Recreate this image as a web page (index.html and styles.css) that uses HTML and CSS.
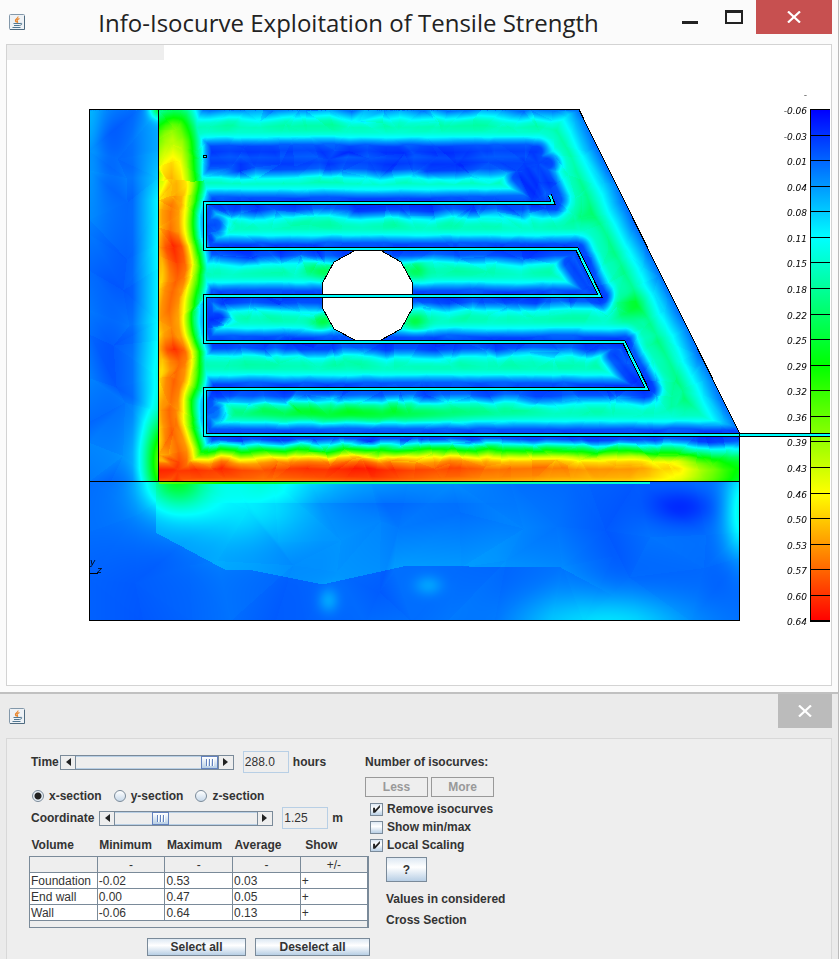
FILE: index.html
```html
<!DOCTYPE html>
<html lang="en">
<head>
  <meta charset="UTF-8">
  <meta name="viewport" content="width=device-width, initial-scale=1.0">
  <title>Info-Isocurve Exploitation of Tensile Strength</title>
  <link rel="stylesheet" href="styles.css">
</head>
<body>
  <svg class="defs" width="0" height="0" aria-hidden="true">
    <symbol id="java" viewBox="0 0 16 16">
      <rect x="0.5" y="0.5" width="15" height="15" rx="1" fill="#eef2f6" stroke="#8398aa"/>
      <path d="M1 15.5h14.500V2" fill="none" stroke="#4f6b80"/>
      <path d="M9 2.500C9.500 4.500 5.500 5 6.500 7c.3.700 1 1 1 1.500M10.500 4.500C8 5.500 7.500 6.500 8.500 7.500c.4.500.2.900-.2 1.300" fill="none" stroke="#e8862d" stroke-width="1.200"/>
      <path d="M4.500 9.500h6.500M5 11.500h5.500M3.500 13.500h8" fill="none" stroke="#527892" stroke-width="1.200"/>
      <path d="M11 9.500c2.500-1 2.500 1.500-.5 2" fill="none" stroke="#527892"/>
    </symbol>
  </svg>

  <section class="window">
    <header class="titlebar">
      <svg class="app-icon" width="16" height="16"><use href="#java"/></svg>
      <h1>Info-Isocurve Exploitation of Tensile Strength</h1>
      <div class="window-buttons">
        <button type="button" aria-label="Minimize">
          <svg width="44" height="34"><rect x="14" y="21" width="16" height="3" fill="#222"/></svg>
        </button>
        <button type="button" aria-label="Maximize">
          <svg width="44" height="34"><path d="M13 10h18v14H13zM15 13v9h14v-9z" fill="#222" fill-rule="evenodd"/></svg>
        </button>
        <button type="button" class="close" aria-label="Close">
          <svg width="14" height="12"><path d="M1 0.500L13 11.500M13 0.500L1 11.500" stroke="#fff" stroke-width="2.200"/></svg>
        </button>
      </div>
    </header>

    <div class="plot">
      <div class="plot-toolbar"></div>
      <canvas id="field" width="824" height="640"></canvas>
      <svg class="outline" viewBox="7 45 824 640">
        <defs>
          <linearGradient id="scale" x1="0" y1="0" x2="0" y2="1">
            <stop offset="0" stop-color="#00f"/>
            <stop offset="0.25" stop-color="#0ff"/>
            <stop offset="0.5" stop-color="#0f0"/>
            <stop offset="0.75" stop-color="#ff0"/>
            <stop offset="1" stop-color="#f00"/>
          </linearGradient>
        </defs>

        <!-- colour scale, ticks are added by plot.js -->
        <rect x="811" y="110" width="19" height="511" fill="url(#scale)"/>
        <path class="edge" d="M810.500 109V622M810 620.500H830M810 621.500H830"/>
        <g id="ticks" class="ticks"><text x="807" y="98">-</text></g>

        <!-- opening -->
        <path class="edge opening" d="M356 250H380L401 262L412.500 283V308L401 329L381 340H355L334 329L322.500 308V283L334 262Z"/>

        <!-- wall, end wall, foundation -->
        <path class="edge" d="M89.500 109.500H579L739.500 433V620.500H89.500ZM158.500 109V481M89 481.500H740"/>

        <!-- cooling pipes -->
        <g class="pipe">
          <path d="M550 195L553 203H205V249H577L600 296H205V342H624L647 389H205V435H830"/>
          <path d="M550 195L553 203H205V249H577L600 296H205V342H624L647 389H205V435H830"/>
        </g>
        <rect x="203" y="155" width="4" height="3"/>
        <rect x="204" y="156" width="2" height="1" fill="#0ff"/>
        <path class="edge" d="M739.500 432V438M90 573.500H98"/>
        <text class="axis" x="90" y="565">y</text>
        <text class="axis" x="97" y="573">z</text>
      </svg>
    </div>
  </section>

  <section class="window dialog">
    <header class="titlebar">
      <svg class="app-icon" width="16" height="16"><use href="#java"/></svg>
      <div class="window-buttons">
        <button type="button" class="close" aria-label="Close">
          <svg width="14" height="12"><path d="M1 0.500L13 11.500M13 0.500L1 11.500" stroke="#fff" stroke-width="2.200"/></svg>
        </button>
      </div>
    </header>

    <form class="panel">
      <div class="sections">
        <div class="row">
          <label for="time">Time</label>
          <div class="scrollbar">
            <button type="button" aria-label="Earlier"><svg width="5" height="8"><path d="M5 0v8L0 4z"/></svg></button>
            <input type="range" id="time" min="0" max="100" value="100">
            <button type="button" aria-label="Later"><svg width="5" height="8"><path d="M0 0v8l5-4z"/></svg></button>
          </div>
          <input type="text" id="hours" value="288.0">
          <label for="hours">hours</label>
        </div>

        <div class="radios">
          <label><input type="radio" name="section" checked>x-section</label>
          <label><input type="radio" name="section">y-section</label>
          <label><input type="radio" name="section">z-section</label>
        </div>

        <div class="row coordinate">
          <label for="coord">Coordinate</label>
          <div class="scrollbar">
            <button type="button" aria-label="Decrease"><svg width="5" height="8"><path d="M5 0v8L0 4z"/></svg></button>
            <input type="range" id="coord" min="0" max="100" value="29">
            <button type="button" aria-label="Increase"><svg width="5" height="8"><path d="M0 0v8l5-4z"/></svg></button>
          </div>
          <input type="text" id="meters" value="1.25">
          <label for="meters">m</label>
        </div>

        <table>
          <thead>
            <tr><th>Volume</th><th>Minimum</th><th>Maximum</th><th>Average</th><th>Show</th></tr>
          </thead>
          <tbody>
            <tr class="sort"><td></td><td>-</td><td>-</td><td>-</td><td>+/-</td></tr>
            <tr><td>Foundation</td><td>-0.02</td><td>0.53</td><td>0.03</td><td>+</td></tr>
            <tr><td>End wall</td><td>0.00</td><td>0.47</td><td>0.05</td><td>+</td></tr>
            <tr><td>Wall</td><td>-0.06</td><td>0.64</td><td>0.13</td><td>+</td></tr>
            <tr class="tail"><td colspan="5"></td></tr>
          </tbody>
        </table>

        <div class="actions">
          <button type="button" class="btn select-all">Select all</button>
          <button type="button" class="btn deselect-all">Deselect all</button>
        </div>
      </div>

      <div class="options">
        <div class="isocurves">
          <h2>Number of isocurves:</h2>
          <div class="steps">
            <button type="button" class="btn" disabled>Less</button>
            <button type="button" class="btn" disabled>More</button>
          </div>
        </div>
        <label class="check"><input type="checkbox" checked>Remove isocurves</label>
        <label class="check"><input type="checkbox">Show min/max</label>
        <label class="check"><input type="checkbox" checked>Local Scaling</label>
        <div class="help">
          <button type="button" class="btn">?</button>
          <p>Values in considered<br>Cross Section</p>
        </div>
      </div>
    </form>
  </section>

  <script src="plot.js"></script>
</body>
</html>
```

FILE: styles.css
```css
* {
  margin: 0;
  padding: 0;
  box-sizing: border-box;
}

body {
  font-family: "Liberation Sans", Arial, sans-serif;
  font-size: 12px;
  color: #333;
  background: #ebebeb;
  min-height: 100vh;
  display: flex;
  flex-direction: column;
}

.defs {
  position: absolute;
}

button {
  font: inherit;
  color: inherit;
  border: none;
  background: none;
}

/* windows */
.window {
  background: #fbfbfb;
  padding: 0 6px 6px;
  border-right: 1px solid #bbb;
  border-bottom: 2px solid #c0c0c0;
}

.titlebar {
  height: 44px;
  display: flex;
  align-items: center;
}

.app-icon {
  margin-left: 3px;
}

h1 {
  flex: 1;
  padding: 2px 0 0 4px;
  font-family: "Open Sans", "Noto Sans", sans-serif;
  font-size: 24px;
  font-weight: 400;
  line-height: 32px;
  color: #222;
  text-align: center;
  white-space: nowrap;
}

.window-buttons {
  display: flex;
  align-self: flex-start;
  margin-left: auto;
}

.window-buttons svg {
  display: block;
}

.close {
  width: 76px;
  height: 34px;
  display: flex;
  align-items: center;
  justify-content: center;
  background: #c75050;
}

.dialog {
  flex: 1;
  display: flex;
  flex-direction: column;
  background: #ebebeb;
  padding-bottom: 0;
  border-bottom: none;
}

.dialog .close {
  width: 54px;
  background: #bbb;
}

/* plot */
.plot {
  display: grid;
  background: #fff;
  border: 1px solid #d3d3d3;
}

.plot > * {
  grid-area: 1 / 1;
}

.plot canvas,
.outline {
  display: block;
  width: 100%;
  height: auto;
}

.plot-toolbar {
  width: 157px;
  height: 15px;
  background: #eee;
}

.edge {
  fill: none;
  stroke: #000;
  shape-rendering: crispEdges;
}

.opening {
  fill: #fff;
}

.pipe path {
  fill: none;
  stroke: #000;
  stroke-width: 4px;
  shape-rendering: crispEdges;
}

.pipe path + path {
  stroke: #0ff;
  stroke-width: 2px;
}

.ticks text,
.axis {
  font-family: "DejaVu Sans", sans-serif;
  font-size: 9px;
  font-style: italic;
  fill: #000;
}

.ticks text {
  text-anchor: end;
}

/* controls */
.panel {
  flex: 1;
  display: flex;
  align-items: flex-start;
  padding: 12px 22px 3px;
  background: #eee;
  border: 1px solid #d8d8d8;
  border-bottom: none;
  font-weight: 700;
}

.sections {
  width: 341px;
}

.row {
  display: flex;
  align-items: center;
  height: 22px;
  padding-left: 2px;
}

.scrollbar {
  display: flex;
  width: 174px;
  height: 15px;
  margin: 0 9px 0 1px;
  border: 1px solid #7a8a99;
}

.coordinate .scrollbar {
  margin-left: 5px;
}

.scrollbar button {
  width: 15px;
  display: flex;
  align-items: center;
  justify-content: center;
}

.scrollbar svg {
  fill: #222;
}

input[type="range"] {
  appearance: none;
  flex: 1;
  min-width: 0;
  background: #eee;
  border: 1px solid #b8cfe5;
  border-width: 1px 0;
  box-shadow: -1px 0 #7a8a99, 1px 0 #7a8a99;
}

input[type="range"]::-webkit-slider-thumb {
  appearance: none;
  width: 17px;
  height: 13px;
  border: 1px solid #6382bf;
  background:
    repeating-linear-gradient(90deg, #6382bf 0 1px, #fff 1px 2px, transparent 2px 3px) 4px 2px / 8px 7px no-repeat,
    linear-gradient(#fff, #b8cfe5);
}

input[type="text"] {
  width: 46px;
  height: 22px;
  margin-right: 4px;
  padding: 0 1px;
  font: 400 12px "Liberation Sans", Arial, sans-serif;
  color: #333;
  background: #eee;
  border: 1px solid #b8cfe5;
}

.radios {
  display: flex;
  gap: 12px;
  margin: 16px 0 4px;
  padding-left: 3px;
}

.radios label,
.check {
  display: flex;
  align-items: center;
}

.radios label {
  height: 14px;
}

input[type="radio"] {
  appearance: none;
  width: 12px;
  height: 12px;
  margin-right: 5px;
  border: 1px solid #7a8a99;
  border-radius: 50%;
  background: linear-gradient(#fff, #c8d9ea);
}

input[type="radio"]:checked {
  background: radial-gradient(circle, #222 3px, #e8f0f7 4px);
}

table {
  width: 340px;
  table-layout: fixed;
  border-collapse: collapse;
  font-weight: 400;
}

th {
  height: 27px;
  padding: 5px 0 0 2px;
  font-weight: 700;
  text-align: left;
}

th:last-child {
  padding-left: 5px;
}

td {
  height: 16px;
  padding: 1px 1px 0;
  line-height: 14px;
  background: #fff;
  border: 1px solid #7a8a99;
  white-space: nowrap;
}

td:last-child {
  border-right-width: 2px;
}

.sort td {
  background: #eee;
  text-align: center;
}

.tail td {
  height: 7px;
  background: #eee;
}

.actions {
  display: flex;
  justify-content: flex-end;
  gap: 9px;
  margin-top: 10px;
}

.btn {
  height: 18px;
  font-weight: 700;
  background: linear-gradient(#dde8f3, #fff 40%, #b8cfe5);
  border: 1px solid #7a8a99;
}

.btn:disabled {
  color: #999;
  background: #eee;
  border-color: #999;
}

.select-all {
  width: 99px;
}

.deselect-all {
  width: 115px;
}

.isocurves {
  margin-left: -5px;
}

h2 {
  font-size: 12px;
  line-height: 22px;
}

.steps {
  display: flex;
  gap: 3px;
  margin: 4px 0 3px;
}

.steps .btn {
  width: 63px;
  height: 20px;
}

.check {
  height: 18px;
}

input[type="checkbox"] {
  appearance: none;
  position: relative;
  width: 13px;
  height: 13px;
  margin-right: 4px;
  border: 1px solid #7a8a99;
  background: linear-gradient(#dde8f3, #fff 40%, #b8cfe5);
}

input[type="checkbox"]:checked::after {
  content: "";
  position: absolute;
  inset: 1px;
  background: #222;
  clip-path: polygon(12% 36%, 34% 36%, 34% 62%, 88% 6%, 88% 34%, 34% 92%, 12% 92%);
}

.help {
  margin: 3px 0 0 16px;
}

.help .btn {
  width: 41px;
  height: 25px;
}

.help p {
  margin-top: 7px;
  line-height: 21px;
}
```

FILE: plot.js
```js
const X0 = 7, Y0 = 45;
const canvas = document.getElementById('field');
const ctx = canvas.getContext('2d');
const W = canvas.width, H = canvas.height;

// pipe runs, the top loop is drawn without an outline
const pipes = [
  [207, 151, 535, 151], [207, 163, 545, 163], [532, 152, 556, 200], [522, 160, 545, 203], [518, 176, 540, 200],
  [205, 203, 553, 203], [205, 203, 205, 249], [205, 249, 577, 249], [577, 249, 600, 296],
  [205, 296, 600, 296], [205, 296, 205, 342], [205, 342, 624, 342], [624, 342, 647, 389],
  [205, 389, 647, 389], [205, 389, 205, 435], [205, 435, 739, 435],
  [205, 226, 215, 226], [205, 318, 215, 318], [205, 412, 213, 412],
  [570, 262, 590, 290], [615, 355, 637, 383]
];

// labels of the colour scale
const labels = ['-0.06', '-0.03', '0.01', '0.04', '0.08', '0.11', '0.15', '0.18', '0.22', '0.25', '0.29',
  '0.32', '0.36', '0.39', '0.43', '0.46', '0.50', '0.53', '0.57', '0.60', '0.64'];

let seed = 7;
function random() {
  seed = (seed * 16807) % 2147483647;
  return seed / 2147483647;
}

// linear interpolation in a list of [position, value]
function lerp(list, p) {
  if (p <= list[0][0]) return list[0][1];
  for (let i = 1; i < list.length; i++) {
    if (p <= list[i][0]) {
      const [a, va] = list[i - 1];
      const [b, vb] = list[i];
      return va + (vb - va) * (p - a) / (b - a);
    }
  }
  return list[list.length - 1][1];
}

function bump(x, y, cx, cy, rx, ry) {
  const dx = (x - cx) / rx, dy = (y - cy) / ry;
  return Math.exp(-dx * dx - dy * dy);
}

function pipeDistance(x, y) {
  let best = 1e9;
  for (const [x1, y1, x2, y2] of pipes) {
    const dx = x2 - x1, dy = y2 - y1;
    const k = Math.max(0, Math.min(1, ((x - x1) * dx + (y - y1) * dy) / (dx * dx + dy * dy)));
    best = Math.min(best, (x - x1 - k * dx) ** 2 + (y - y1 - k * dy) ** 2);
  }
  return Math.sqrt(best);
}

const byDistance = [[0, 0.06], [6, 0.08], [11, 0.17], [15, 0.26], [20, 0.31], [26, 0.33], [38, 0.39], [55, 0.37]];
const bySlant = [[0, 0.11], [9, 0.17], [19, 0.24], [34, 0.35], [60, 0.6]];
const byTop = [[0, 0.12], [7, 0.23], [12, 0.3], [18, 0.34], [40, 0.6]];
const leftHeat = [[110, 0.42], [125, 0.58], [140, 0.68], [165, 0.77], [205, 0.87], [230, 0.9], [245, 0.97],
  [262, 0.94], [290, 0.88], [335, 0.89], [350, 0.95], [370, 0.89], [440, 0.9], [470, 0.96]];
const leftShape = [[158, 0.88], [165, 0.96], [173, 1], [181, 0.96], [187, 0.84], [193, 0.66], [199, 0.44], [204, 0.24], [214, 0]];
const baseShape = [[437, 0], [443, 0.22], [448, 0.46], [453, 0.64], [457, 0.8], [462, 0.92], [469, 1], [477, 0.97], [481, 0.93]];
const baseHeat = [[158, 0.97], [270, 0.93], [375, 0.97], [430, 0.93], [500, 0.89], [560, 0.86], [630, 0.85], [680, 0.76], [712, 0.62], [739, 0.48]];
const ridge = [[155, 532], [226, 570], [252, 570], [322, 584], [403, 566], [468, 566], [560, 567], [616, 597]];

function wall(x, y) {
  const s = 579 + (y - 110) * 160 / 323 - x;
  let v = Math.min(lerp(byDistance, pipeDistance(x, y)), lerp(byTop, y - 110));
  if (y < 440) v = Math.min(v, lerp(bySlant, s));
  v += 0.15 * bump(x, y, 350, 412, 110, 11);
  v += 0.08 * bump(x, y, 628, 307, 16, 14);
  v += 0.12 * (bump(x, y, 322, 268, 12, 9) + bump(x, y, 414, 268, 12, 9) + bump(x, y, 322, 322, 12, 9) + bump(x, y, 414, 322, 12, 9));
  const band = y > 180 ? 4 * Math.cos((y - 272) * Math.PI * 2 / 93) : 0;
  const left = lerp(leftHeat, y) * lerp(leftShape, x - band);
  const base = lerp(baseHeat, x) * lerp(baseShape, y);
  return Math.max(v, left, base);
}

function endWall(x, y) {
  let v = 0.12;
  v += 0.13 * Math.max(0, (x - 132) / 26) * lerp([[150, 0.3], [200, 1]], y);
  v += 0.05 * bump(x, y, 89, 140, 14, 60);
  v -= 0.03 * bump(x, y, 118, 155, 25, 35);
  v -= 0.03 * bump(x, y, 112, 340, 25, 90);
  v += 0.3 * bump(x, y, 160, 108, 10, 10);
  v += 0.38 * bump(x, y, 166, 462, 22, 42);
  return v;
}

function foundation(x, y) {
  const r = lerp(ridge, x);
  let v = 0.1;
  if (x > 155 && x < 616 && y < r) v += 0.045 * (1 - Math.min(1, (r - y) / 90)) * Math.min(1, (616 - x) / 120);
  v += 0.3 * bump(x, y, 176, 476, 32, 30);
  v += 0.13 * bump(x, y, 235, 500, 80, 42);
  if (y < 503) v += 0.09 * (1 - (y - 481) / 26) * lerp([[200, 0], [260, 1], [380, 0.7], [520, 0]], x);
  v -= 0.06 * bump(x, y, 683, 506, 34, 18);
  v += 0.18 * bump(x, y, 744, 510, 20, 48);
  v += 0.12 * bump(x, y, 605, 626, 90, 34);
  v += 0.06 * bump(x, y, 328, 600, 10, 12) + 0.05 * bump(x, y, 428, 585, 14, 10);
  if (y < 484 && x > 158 && x < 650) v = Math.max(v, lerp([[158, 0.6], [230, 0.5], [330, 0.38], [650, 0.3]], x));
  return v;
}

// element noise, interpolated linearly over jittered triangles
const noise = new Float32Array(W * H);

function triangle(a, b, c, step) {
  const area = (b.x - a.x) * (c.y - a.y) - (c.x - a.x) * (b.y - a.y);
  if (!area) return;
  const offset = (random() - 0.5) * step;
  const left = Math.max(0, Math.floor(Math.min(a.x, b.x, c.x)));
  const right = Math.min(W - 1, Math.ceil(Math.max(a.x, b.x, c.x)));
  const top = Math.max(0, Math.floor(Math.min(a.y, b.y, c.y)));
  const bottom = Math.min(H - 1, Math.ceil(Math.max(a.y, b.y, c.y)));
  for (let y = top; y <= bottom; y++) {
    for (let x = left; x <= right; x++) {
      const u = ((b.x - x) * (c.y - y) - (c.x - x) * (b.y - y)) / area;
      const v = ((c.x - x) * (a.y - y) - (a.x - x) * (c.y - y)) / area;
      const w = 1 - u - v;
      if (u >= 0 && v >= 0 && w >= 0) noise[y * W + x] = u * a.n + v * b.n + w * c.n + offset;
    }
  }
}

function mesh(x1, y1, x2, y2, cell, amount, step) {
  const cols = Math.round((x2 - x1) / cell), rows = Math.round((y2 - y1) / cell);
  const nodes = [];
  for (let j = 0; j <= rows; j++) {
    for (let i = 0; i <= cols; i++) {
      const jx = i % cols ? (random() - 0.5) * cell * 0.9 : 0;
      const jy = j % rows ? (random() - 0.5) * cell * 0.9 : 0;
      nodes.push({
        x: x1 - X0 + i * (x2 - x1) / cols + jx,
        y: y1 - Y0 + j * (y2 - y1) / rows + jy,
        n: (random() - 0.5) * 2 * amount
      });
    }
  }
  for (let j = 0; j < rows; j++) {
    for (let i = 0; i < cols; i++) {
      const a = nodes[j * (cols + 1) + i], b = nodes[j * (cols + 1) + i + 1];
      const c = nodes[(j + 1) * (cols + 1) + i], d = nodes[(j + 1) * (cols + 1) + i + 1];
      if (random() > 0.5) {
        triangle(a, b, c, step);
        triangle(b, d, c, step);
      } else {
        triangle(a, b, d, step);
        triangle(a, d, c, step);
      }
    }
  }
}

mesh(158, 110, 740, 481, 17, 0.035, 0.024);
mesh(89, 110, 158, 481, 34, 0.02, 0.01);
mesh(89, 481, 740, 621, 46, 0.014, 0.006);

// blue - cyan - green - yellow - red
function colour(t) {
  const p = Math.max(0, Math.min(1, t)) * 4;
  if (p < 1) return [0, 255 * p, 255];
  if (p < 2) return [0, 255, 255 * (2 - p)];
  if (p < 3) return [255 * (p - 2), 255, 0];
  return [255, 255 * (4 - p), 0];
}

const image = ctx.createImageData(W, H);
for (let y = 110; y <= 620; y++) {
  for (let x = 90; x <= 739; x++) {
    if (y < 433 && x > 579 + (y - 110) * 160 / 323) continue;
    const i = (y - Y0) * W + x - X0;
    const n = noise[i];
    let value;
    if (y > 481) value = foundation(x, y) + n;
    else if (x < 158) value = endWall(x, y) + n;
    else value = wall(x + n * 60, y + n * 50) + n * 0.6;
    const [r, g, b] = colour(value);
    image.data.set([r, g, b, 255], i * 4);
  }
}
ctx.putImageData(image, 0, 0);

const ticks = document.getElementById('ticks');
const ns = 'http://www.w3.org/2000/svg';
labels.forEach((label, i) => {
  const y = 109 + Math.round(i * 25.57);
  const line = document.createElementNS(ns, 'path');
  line.setAttribute('class', 'edge');
  line.setAttribute('d', `M811 ${y + 0.5}H830`);
  const text = document.createElementNS(ns, 'text');
  text.setAttribute('x', 807);
  text.setAttribute('y', y + 5);
  text.textContent = label;
  ticks.append(line, text);
});
```
